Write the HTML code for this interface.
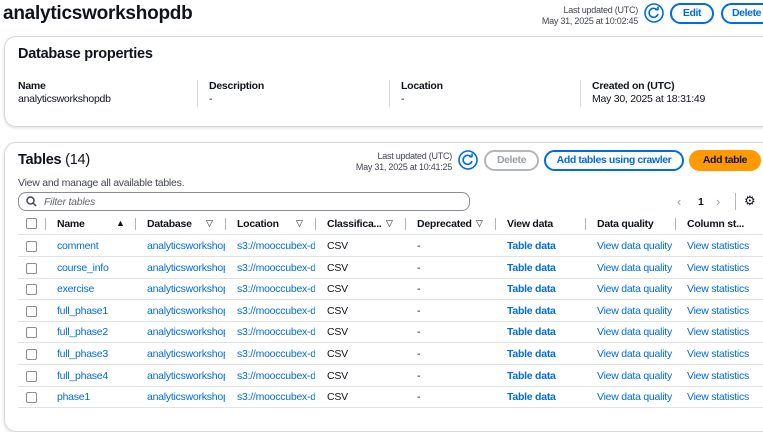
<!DOCTYPE html>
<html><head><style>
*{box-sizing:border-box;margin:0;padding:0}
body{width:763px;height:415px;overflow:hidden;background:#fff;font-family:"Liberation Sans",sans-serif;color:#0f141a;font-size:10.5px;letter-spacing:-0.25px;position:relative}
.a{position:absolute;white-space:nowrap}
.b{font-weight:bold}
.lnk{color:#006ce0}
.btn{position:absolute;height:21px;border:2px solid #006ce0;border-radius:11px;color:#006ce0;font-weight:bold;font-size:10.5px;text-align:center;line-height:17px;letter-spacing:-0.4px}
.panel{position:absolute;border:1px solid #d5d9de;border-radius:12px;box-shadow:0 1px 3px rgba(0,0,0,.15)}
.cb{position:absolute;width:11px;height:11px;border:1.5px solid #8c8c94;border-radius:2px}
.sep{position:absolute;width:1px;height:12px;background:#b4b4bb}
.hl{position:absolute;left:18px;width:745px;height:1px;background:#e0e2e5}
.sm{font-size:9px;color:#424650;text-align:right}
</style></head><body>
<div class="a b" style="left:3px;top:3px;font-size:19px">analyticsworkshopdb</div>
<div class="a sm" style="right:125px;top:5px;line-height:11px">Last updated (UTC)<br>May 31, 2025 at 10:02:45</div>
<svg class="a" style="left:644px;top:3px" width="20" height="20" viewBox="0 0 20 20"><circle cx="10" cy="10" r="9" fill="none" stroke="#006ce0" stroke-width="1.6"/><path d="M13.5 7.5A4.5 4.5 0 1 0 14 11" fill="none" stroke="#006ce0" stroke-width="1.6"/><path d="M11 6.5h3v-3" fill="none" stroke="#006ce0" stroke-width="1.6"/></svg>
<div class="btn" style="left:670px;top:3px;width:44px">Edit</div>
<div class="btn" style="left:721px;top:3px;width:60px;text-align:left;padding-left:9px">Delete</div>

<div class="panel" style="left:4px;top:36px;width:775px;height:91px"></div>
<div class="a b" style="left:18px;top:46px;font-size:14.5px">Database properties</div>
<div class="a b" style="left:18px;top:80px">Name</div>
<div class="a" style="left:18px;top:93px">analyticsworkshopdb</div>
<div class="sep" style="left:197px;top:80px;height:27px;background:#d5d9de"></div>
<div class="a b" style="left:209px;top:80px">Description</div>
<div class="a" style="left:209px;top:93px">-</div>
<div class="sep" style="left:389px;top:80px;height:27px;background:#d5d9de"></div>
<div class="a b" style="left:401px;top:80px">Location</div>
<div class="a" style="left:401px;top:93px">-</div>
<div class="sep" style="left:580px;top:80px;height:27px;background:#d5d9de"></div>
<div class="a b" style="left:592px;top:80px">Created on (UTC)</div>
<div class="a" style="left:592px;top:93px">May 30, 2025 at 18:31:49</div>

<div class="panel" style="left:4px;top:142px;width:775px;height:290px"></div>
<div class="a" style="left:18px;top:152px;font-size:14.5px"><b>Tables</b> (14)</div>
<div class="a sm" style="right:311px;top:151px;line-height:11px">Last updated (UTC)<br>May 31, 2025 at 10:41:25</div>
<svg class="a" style="left:458px;top:150px" width="20" height="20" viewBox="0 0 20 20"><circle cx="10" cy="10" r="9" fill="none" stroke="#006ce0" stroke-width="1.6"/><path d="M13.5 7.5A4.5 4.5 0 1 0 14 11" fill="none" stroke="#006ce0" stroke-width="1.6"/><path d="M11 6.5h3v-3" fill="none" stroke="#006ce0" stroke-width="1.6"/></svg>
<div class="btn" style="left:484px;top:150px;width:55px;border-color:#b4b4bb;color:#9ba0a6">Delete</div>
<div class="btn" style="left:544px;top:150px;width:140px">Add tables using crawler</div>
<div class="btn" style="left:689px;top:150px;width:72px;background:#ff9900;border-color:#ff9900;color:#0f141a">Add table</div>
<div class="a" style="left:18px;top:177px;color:#424650">View and manage all available tables.</div>
<div class="a" style="left:18px;top:192px;width:452px;height:19px;border:1.5px solid #8c8c94;border-radius:8px"></div>
<svg class="a" style="left:26px;top:196px" width="11" height="11" viewBox="0 0 11 11"><circle cx="4.5" cy="4.5" r="3.5" fill="none" stroke="#424650" stroke-width="1.5"/><path d="M7 7l3 3" stroke="#424650" stroke-width="1.5"/></svg>
<div class="a" style="left:44px;top:196px;font-style:italic;color:#656871">Filter tables</div>
<div class="a" style="left:677px;top:194px;color:#9ba0a6;font-size:13px">‹</div>
<div class="a b" style="left:698px;top:196px">1</div>
<div class="a" style="left:716px;top:194px;color:#9ba0a6;font-size:13px">›</div>
<div class="sep" style="left:735px;top:193px;height:17px"></div>
<div class="a" style="left:744px;top:193px;font-size:13px">⚙</div>

<div class="cb" style="left:26px;top:218px"></div>
<div class="sep" style="left:45px;top:218px"></div>
<div class="a b" style="left:57px;top:218px">Name</div><div class="a" style="left:116px;top:218px;font-size:9px">▲</div>
<div class="sep" style="left:135px;top:218px"></div>
<div class="a b" style="left:147px;top:218px">Database</div><div class="a" style="left:206px;top:218px;font-size:9px">▽</div>
<div class="sep" style="left:225px;top:218px"></div>
<div class="a b" style="left:237px;top:218px">Location</div><div class="a" style="left:296px;top:218px;font-size:9px">▽</div>
<div class="sep" style="left:315px;top:218px"></div>
<div class="a b" style="left:327px;top:218px">Classifica...</div><div class="a" style="left:386px;top:218px;font-size:9px">▽</div>
<div class="sep" style="left:405px;top:218px"></div>
<div class="a b" style="left:417px;top:218px">Deprecated</div><div class="a" style="left:476px;top:218px;font-size:9px">▽</div>
<div class="sep" style="left:495px;top:218px"></div>
<div class="a b" style="left:507px;top:218px">View data</div>
<div class="sep" style="left:585px;top:218px"></div>
<div class="a b" style="left:597px;top:218px">Data quality</div>
<div class="sep" style="left:675px;top:218px"></div>
<div class="a b" style="left:687px;top:218px">Column st...</div>
<div class="hl" style="top:234px"></div>

<div id="rows"></div>
<script>
var n=["comment","course_info","exercise","full_phase1","full_phase2","full_phase3","full_phase4","phase1"],h="";
n.forEach(function(t,i){var y=240+i*21.6;
h+='<div class="cb" style="left:26px;top:'+(y+1)+'px"></div>'+
'<div class="a lnk" style="left:57px;top:'+y+'px">'+t+'</div>'+
'<div class="a lnk" style="left:147px;top:'+y+'px;width:78px;overflow:hidden">analyticsworkshopdb</div>'+
'<div class="a lnk" style="left:237px;top:'+y+'px;width:78px;overflow:hidden">s3://mooccubex-data</div>'+
'<div class="a" style="left:327px;top:'+y+'px">CSV</div>'+
'<div class="a" style="left:417px;top:'+y+'px">-</div>'+
'<div class="a lnk b" style="left:507px;top:'+y+'px">Table data</div>'+
'<div class="a lnk" style="left:597px;top:'+y+'px">View data quality</div>'+
'<div class="a lnk" style="left:687px;top:'+y+'px">View statistics</div>'+
'<div class="hl" style="top:'+(y+16)+'px"></div>';});
document.getElementById("rows").innerHTML=h;
</script>
</body></html>
